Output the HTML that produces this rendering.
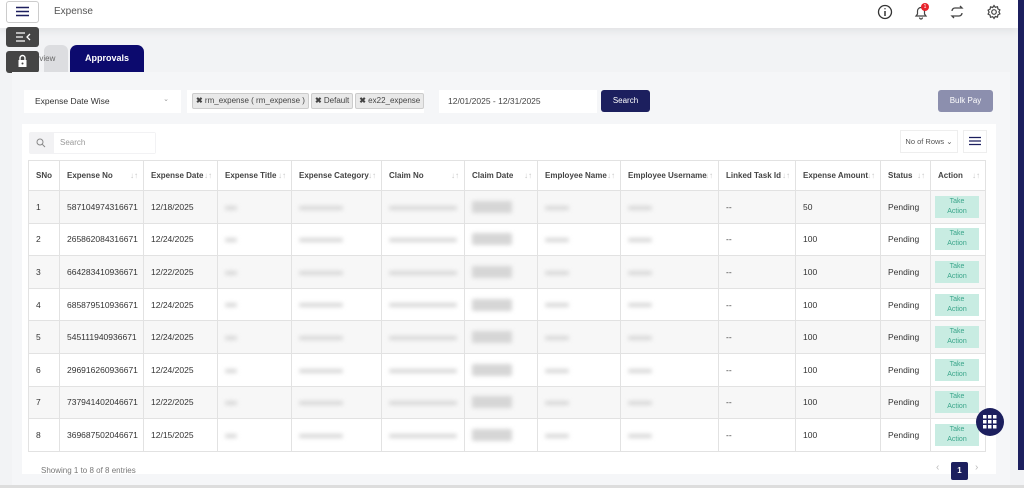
<!DOCTYPE html>
<html><head><meta charset="utf-8"><style>
*{box-sizing:border-box;margin:0;padding:0}
body{width:1024px;height:488px;overflow:hidden;background:#f2f3f5;font-family:"Liberation Sans",sans-serif;color:#222;position:relative}
.abs{position:absolute}
.top{left:0;top:0;width:1018px;height:28px;background:#fff;box-shadow:0 3px 8px rgba(0,0,0,.07)}
.rbar{left:1018px;top:0;width:6px;height:470px;background:#1c1f5e}
.btm{left:0;top:485px;width:1024px;height:3px;background:#ddd}
.tab{font-size:9px;font-weight:bold}
table{border-collapse:collapse;font-size:8px;table-layout:fixed}
th,td{border:1px solid #e2e2e2;text-align:left;padding:0 7px;white-space:nowrap;overflow:hidden}
th{height:30px;font-weight:bold;color:#444;position:relative}
th span.s{position:absolute;right:5px;top:10px;color:#c8c8c8;font-size:8px;font-weight:normal}
td{height:32.6px;font-size:8.5px;color:#333}
tr.o td{background:#f7f7f7}
tr.e td{background:#fff}
.bl{display:inline-block;height:4px;background:#d6d6d6;filter:blur(2px);border-radius:2px;vertical-align:middle}
.ta{width:44px;height:22px;background:#c8ece2;color:#3aa58a;font-size:7px;text-align:center;line-height:10px;padding-top:1px}
.chip{display:inline-block;height:16px;background:#e9e9e9;border:1px solid #ccc;border-radius:2px;font-size:8px;line-height:14px;padding:0 3px;color:#444;margin-right:2px;vertical-align:top}
</style></head><body>
<div class="abs top"></div>
<div class="abs" style="left:6px;top:1px;width:33px;height:22px;background:#fff;border:1px solid #ccc;border-radius:3px"></div>
<svg class="abs" style="left:15px;top:6px" width="15" height="11"><path d="M1 1.5H14M1 5.5H14M1 9.5H14" stroke="#1c1f5e" stroke-width="1.6"/></svg>
<div class="abs" style="left:54px;top:6px;font-size:10px;color:#555">Expense</div>
<svg class="abs" style="left:877px;top:4px" width="16" height="16"><circle cx="8" cy="8" r="6.5" fill="none" stroke="#333" stroke-width="1.3"/><path d="M8 7v5M8 4.3v1" stroke="#333" stroke-width="1.5"/></svg>
<svg class="abs" style="left:913px;top:4px" width="16" height="16"><path d="M3 12h10l-1.5-2V7a3.5 3.5 0 0 0-7 0v3z M6.5 13.5a1.5 1.5 0 0 0 3 0" fill="none" stroke="#444" stroke-width="1.2"/></svg>
<div class="abs" style="left:921px;top:3px;width:8px;height:8px;border-radius:50%;background:#e8232b;color:#fff;font-size:5px;text-align:center;line-height:8px">1</div>
<svg class="abs" style="left:949px;top:4px" width="16" height="16"><path d="M3 7a3 3 0 0 1 3-3h7l-2-2M13 9a3 3 0 0 1-3 3H3l2 2" fill="none" stroke="#444" stroke-width="1.3"/></svg>
<svg class="abs" style="left:986px;top:4px" width="16" height="16"><circle cx="8" cy="8" r="2.3" fill="none" stroke="#444" stroke-width="1.2"/><path d="M8 1.5l1.3 1.8 2.2-.6.4 2.2 2 1-1 2 1 2-2 1-.4 2.2-2.2-.6L8 14.5l-1.3-1.8-2.2.6-.4-2.2-2-1 1-2-1-2 2-1 .4-2.2 2.2.6z" fill="none" stroke="#444" stroke-width="1.2"/></svg>
<div class="abs rbar"></div>

<div class="abs" style="left:44px;top:45px;width:24px;height:27px;background:#dcdde0;border-radius:6px 6px 0 0"></div>
<div class="abs" style="left:22px;top:54px;font-size:8px;color:#666">Overview</div>
<div class="abs tab" style="left:70px;top:45px;width:74px;height:27px;background:#0c0a6e;border-radius:7px 7px 0 0;color:#fff;text-align:center;line-height:27px">Approvals</div>
<div class="abs" style="left:6px;top:27px;width:33px;height:20px;background:#454545;border-radius:3px"></div>
<svg class="abs" style="left:15px;top:31px" width="16" height="12"><path d="M1 2H10M1 6H8M1 10H10M15 3l-3 3 3 3" fill="none" stroke="#fff" stroke-width="1.3"/></svg>
<div class="abs" style="left:6px;top:51px;width:33px;height:22px;background:#454545;border-radius:3px"></div>
<svg class="abs" style="left:17px;top:53px" width="11" height="16"><path d="M3 7V5a2.5 2.5 0 0 1 5 0v2" fill="none" stroke="#fff" stroke-width="1.4"/><rect x="1.5" y="7" width="8" height="7" fill="#fff"/><circle cx="5.5" cy="10.5" r="1" fill="#454545"/></svg>

<div class="abs" style="left:12px;top:72px;width:998px;height:414px;background:#f5f6f8"></div>
<div class="abs" style="left:24px;top:90px;width:157px;height:23px;background:#fff;font-size:8.5px;color:#333;padding:6px 11px">Expense Date Wise<span style="position:absolute;right:12px;top:5px;color:#999;font-size:7px">⌄</span></div>
<div class="abs" style="left:187px;top:90px;width:237px;height:23px;background:#fff;padding:3px 5px;overflow:hidden;white-space:nowrap"><span class="chip"><b>✖</b> rm_expense ( rm_expense )</span><span class="chip"><b>✖</b> Default</span><span class="chip"><b>✖</b> ex22_expense</span></div>
<div class="abs" style="left:439px;top:90px;width:158px;height:23px;background:#fff;font-size:8.5px;color:#444;padding:6px 9px">12/01/2025 - 12/31/2025</div>
<div class="abs" style="left:601px;top:90px;width:49px;height:22px;background:#1c1f5e;border-radius:3px;color:#fff;font-size:8px;text-align:center;line-height:22px">Search</div>
<div class="abs" style="left:938px;top:90px;width:55px;height:22px;background:#8c8fae;border-radius:3px;color:#fff;font-size:8px;text-align:center;line-height:22px">Bulk Pay</div>

<div class="abs" style="left:22px;top:124px;width:974px;height:350px;background:#fff"></div>
<div class="abs" style="left:29px;top:132px;width:127px;height:22px;background:#f2f2f4;border-radius:2px"></div>
<div class="abs" style="left:54px;top:133px;width:101px;height:20px;background:#fff;font-size:8px;color:#999;padding:5px 6px">Search</div>
<svg class="abs" style="left:36px;top:138px" width="10" height="10"><circle cx="4" cy="4" r="3" fill="none" stroke="#888" stroke-width="1"/><path d="M6.3 6.3L9 9" stroke="#888"/></svg>
<div class="abs" style="left:900px;top:130px;width:58px;height:23px;border:1px solid #eee;font-size:7.5px;color:#555;text-align:center;line-height:21px">No of Rows ⌄</div>
<div class="abs" style="left:963px;top:130px;width:24px;height:23px;border:1px solid #eee"></div>
<svg class="abs" style="left:969px;top:136px" width="12" height="10"><path d="M0 1.5H12M0 5H12M0 8.5H12" stroke="#1c1f5e" stroke-width="1.3"/></svg>

<table class="abs" style="left:28px;top:160px;width:957px">
<colgroup><col style="width:31px"><col style="width:84px"><col style="width:74px"><col style="width:74px"><col style="width:90px"><col style="width:83px"><col style="width:73px"><col style="width:83px"><col style="width:98px"><col style="width:77px"><col style="width:85px"><col style="width:50px"><col style="width:55px"></colgroup>
<tr><th>SNo</th><th>Expense No<span class="s">↓↑</span></th><th>Expense Date<span class="s">↓↑</span></th><th>Expense Title<span class="s">↓↑</span></th><th>Expense Category<span class="s">↓↑</span></th><th>Claim No<span class="s">↓↑</span></th><th>Claim Date<span class="s">↓↑</span></th><th>Employee Name<span class="s">↓↑</span></th><th>Employee Username<span class="s">↓↑</span></th><th>Linked Task Id<span class="s">↓↑</span></th><th>Expense Amount<span class="s">↓↑</span></th><th>Status<span class="s">↓↑</span></th><th>Action<span class="s">↓↑</span></th></tr>
<tr class="o"><td>1</td><td>587104974316671</td><td>12/18/2025</td><td><span class="bl" style="width:12px"></span></td><td><span class="bl" style="width:44px"></span></td><td><span class="bl" style="width:68px"></span></td><td><span class="bl" style="width:40px;height:12px"></span></td><td><span class="bl" style="width:24px"></span></td><td><span class="bl" style="width:24px"></span></td><td>--</td><td>50</td><td>Pending</td><td style="padding:0 4px"><div class="ta">Take<br>Action</div></td></tr>
<tr class="e"><td>2</td><td>265862084316671</td><td>12/24/2025</td><td><span class="bl" style="width:12px"></span></td><td><span class="bl" style="width:44px"></span></td><td><span class="bl" style="width:68px"></span></td><td><span class="bl" style="width:40px;height:12px"></span></td><td><span class="bl" style="width:24px"></span></td><td><span class="bl" style="width:24px"></span></td><td>--</td><td>100</td><td>Pending</td><td style="padding:0 4px"><div class="ta">Take<br>Action</div></td></tr>
<tr class="o"><td>3</td><td>664283410936671</td><td>12/22/2025</td><td><span class="bl" style="width:12px"></span></td><td><span class="bl" style="width:44px"></span></td><td><span class="bl" style="width:68px"></span></td><td><span class="bl" style="width:40px;height:12px"></span></td><td><span class="bl" style="width:24px"></span></td><td><span class="bl" style="width:24px"></span></td><td>--</td><td>100</td><td>Pending</td><td style="padding:0 4px"><div class="ta">Take<br>Action</div></td></tr>
<tr class="e"><td>4</td><td>685879510936671</td><td>12/24/2025</td><td><span class="bl" style="width:12px"></span></td><td><span class="bl" style="width:44px"></span></td><td><span class="bl" style="width:68px"></span></td><td><span class="bl" style="width:40px;height:12px"></span></td><td><span class="bl" style="width:24px"></span></td><td><span class="bl" style="width:24px"></span></td><td>--</td><td>100</td><td>Pending</td><td style="padding:0 4px"><div class="ta">Take<br>Action</div></td></tr>
<tr class="o"><td>5</td><td>545111940936671</td><td>12/24/2025</td><td><span class="bl" style="width:12px"></span></td><td><span class="bl" style="width:44px"></span></td><td><span class="bl" style="width:68px"></span></td><td><span class="bl" style="width:40px;height:12px"></span></td><td><span class="bl" style="width:24px"></span></td><td><span class="bl" style="width:24px"></span></td><td>--</td><td>100</td><td>Pending</td><td style="padding:0 4px"><div class="ta">Take<br>Action</div></td></tr>
<tr class="e"><td>6</td><td>296916260936671</td><td>12/24/2025</td><td><span class="bl" style="width:12px"></span></td><td><span class="bl" style="width:44px"></span></td><td><span class="bl" style="width:68px"></span></td><td><span class="bl" style="width:40px;height:12px"></span></td><td><span class="bl" style="width:24px"></span></td><td><span class="bl" style="width:24px"></span></td><td>--</td><td>100</td><td>Pending</td><td style="padding:0 4px"><div class="ta">Take<br>Action</div></td></tr>
<tr class="o"><td>7</td><td>737941402046671</td><td>12/22/2025</td><td><span class="bl" style="width:12px"></span></td><td><span class="bl" style="width:44px"></span></td><td><span class="bl" style="width:68px"></span></td><td><span class="bl" style="width:40px;height:12px"></span></td><td><span class="bl" style="width:24px"></span></td><td><span class="bl" style="width:24px"></span></td><td>--</td><td>100</td><td>Pending</td><td style="padding:0 4px"><div class="ta">Take<br>Action</div></td></tr>
<tr class="e"><td>8</td><td>369687502046671</td><td>12/15/2025</td><td><span class="bl" style="width:12px"></span></td><td><span class="bl" style="width:44px"></span></td><td><span class="bl" style="width:68px"></span></td><td><span class="bl" style="width:40px;height:12px"></span></td><td><span class="bl" style="width:24px"></span></td><td><span class="bl" style="width:24px"></span></td><td>--</td><td>100</td><td>Pending</td><td style="padding:0 4px"><div class="ta">Take<br>Action</div></td></tr>
</table>

<div class="abs" style="left:41px;top:466px;font-size:8px;color:#777">Showing 1 to 8 of 8 entries</div>
<div class="abs" style="left:936px;top:462px;font-size:10px;color:#bbb">‹</div>
<div class="abs" style="left:951px;top:462px;width:17px;height:18px;background:#1c1f5e;border-radius:2px;color:#fff;font-size:8px;font-weight:bold;text-align:center;line-height:18px">1</div>
<div class="abs" style="left:975px;top:462px;font-size:10px;color:#bbb">›</div>

<div class="abs" style="left:976px;top:408px;width:28px;height:28px;border-radius:50%;background:#1c1f5e"></div>
<svg class="abs" style="left:983px;top:415px" width="14" height="14" fill="#fff"><rect x="0" y="0" width="3.5" height="3.5"/><rect x="5" y="0" width="3.5" height="3.5"/><rect x="10" y="0" width="3.5" height="3.5"/><rect x="0" y="5" width="3.5" height="3.5"/><rect x="5" y="5" width="3.5" height="3.5"/><rect x="10" y="5" width="3.5" height="3.5"/><rect x="0" y="10" width="3.5" height="3.5"/><rect x="5" y="10" width="3.5" height="3.5"/><rect x="10" y="10" width="3.5" height="3.5"/></svg>
<div class="abs btm"></div>
</body></html>
